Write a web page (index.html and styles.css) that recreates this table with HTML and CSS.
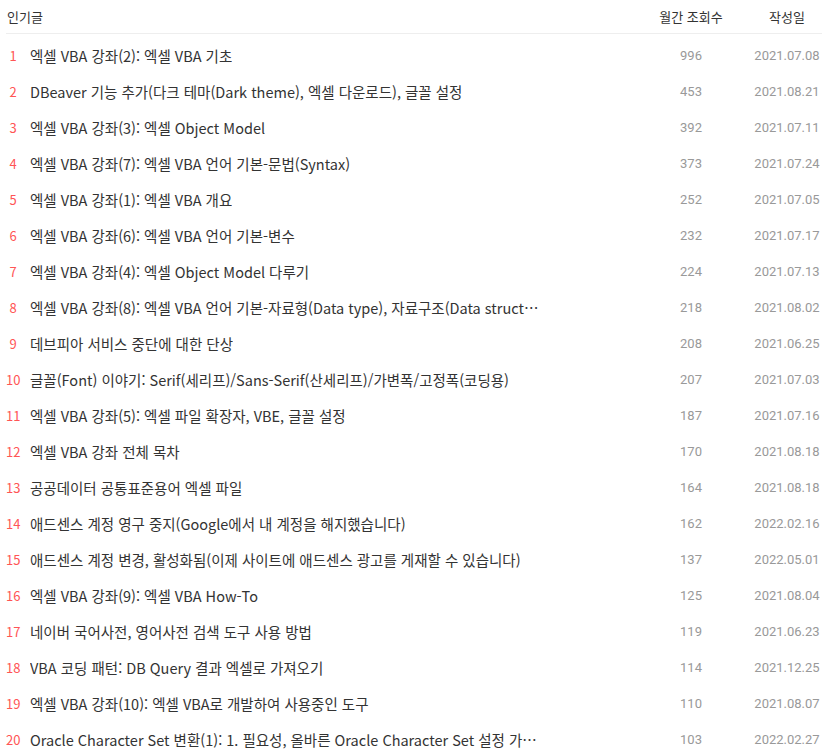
FILE: index.html
```html
<!DOCTYPE html>
<html lang="ko">
<head>
<meta charset="utf-8">
<link rel="stylesheet" href="styles.css">
</head>
<body>
<div class="board">
  <div class="head">
    <div class="h-title">인기글</div>
    <div class="h-views">월간 조회수</div>
    <div class="h-date">작성일</div>
  </div>
  <ul class="list">
    <li class="row"><div class="title"><span class="num">1</span><span class="txt">엑셀 VBA 강좌(2): 엑셀 VBA 기초</span></div><div class="views">996</div><div class="date">2021.07.08</div></li>
    <li class="row"><div class="title"><span class="num">2</span><span class="txt">DBeaver 기능 추가(다크 테마(Dark theme), 엑셀 다운로드), 글꼴 설정</span></div><div class="views">453</div><div class="date">2021.08.21</div></li>
    <li class="row"><div class="title"><span class="num">3</span><span class="txt">엑셀 VBA 강좌(3): 엑셀 Object Model</span></div><div class="views">392</div><div class="date">2021.07.11</div></li>
    <li class="row"><div class="title"><span class="num">4</span><span class="txt">엑셀 VBA 강좌(7): 엑셀 VBA 언어 기본-문법(Syntax)</span></div><div class="views">373</div><div class="date">2021.07.24</div></li>
    <li class="row"><div class="title"><span class="num">5</span><span class="txt">엑셀 VBA 강좌(1): 엑셀 VBA 개요</span></div><div class="views">252</div><div class="date">2021.07.05</div></li>
    <li class="row"><div class="title"><span class="num">6</span><span class="txt">엑셀 VBA 강좌(6): 엑셀 VBA 언어 기본-변수</span></div><div class="views">232</div><div class="date">2021.07.17</div></li>
    <li class="row"><div class="title"><span class="num">7</span><span class="txt">엑셀 VBA 강좌(4): 엑셀 Object Model 다루기</span></div><div class="views">224</div><div class="date">2021.07.13</div></li>
    <li class="row"><div class="title"><span class="num">8</span><span class="txt">엑셀 VBA 강좌(8): 엑셀 VBA 언어 기본-자료형(Data type), 자료구조(Data structure)</span></div><div class="views">218</div><div class="date">2021.08.02</div></li>
    <li class="row"><div class="title"><span class="num">9</span><span class="txt">데브피아 서비스 중단에 대한 단상</span></div><div class="views">208</div><div class="date">2021.06.25</div></li>
    <li class="row"><div class="title"><span class="num">10</span><span class="txt">글꼴(Font) 이야기: Serif(세리프)/Sans-Serif(산세리프)/가변폭/고정폭(코딩용)</span></div><div class="views">207</div><div class="date">2021.07.03</div></li>
    <li class="row"><div class="title"><span class="num">11</span><span class="txt">엑셀 VBA 강좌(5): 엑셀 파일 확장자, VBE, 글꼴 설정</span></div><div class="views">187</div><div class="date">2021.07.16</div></li>
    <li class="row"><div class="title"><span class="num">12</span><span class="txt">엑셀 VBA 강좌 전체 목차</span></div><div class="views">170</div><div class="date">2021.08.18</div></li>
    <li class="row"><div class="title"><span class="num">13</span><span class="txt">공공데이터 공통표준용어 엑셀 파일</span></div><div class="views">164</div><div class="date">2021.08.18</div></li>
    <li class="row"><div class="title"><span class="num">14</span><span class="txt">애드센스 계정 영구 중지(Google에서 내 계정을 해지했습니다)</span></div><div class="views">162</div><div class="date">2022.02.16</div></li>
    <li class="row"><div class="title"><span class="num">15</span><span class="txt">애드센스 계정 변경, 활성화됨(이제 사이트에 애드센스 광고를 게재할 수 있습니다)</span></div><div class="views">137</div><div class="date">2022.05.01</div></li>
    <li class="row"><div class="title"><span class="num">16</span><span class="txt">엑셀 VBA 강좌(9): 엑셀 VBA How-To</span></div><div class="views">125</div><div class="date">2021.08.04</div></li>
    <li class="row"><div class="title"><span class="num">17</span><span class="txt">네이버 국어사전, 영어사전 검색 도구 사용 방법</span></div><div class="views">119</div><div class="date">2021.06.23</div></li>
    <li class="row"><div class="title"><span class="num">18</span><span class="txt">VBA 코딩 패턴: DB Query 결과 엑셀로 가져오기</span></div><div class="views">114</div><div class="date">2021.12.25</div></li>
    <li class="row"><div class="title"><span class="num">19</span><span class="txt">엑셀 VBA 강좌(10): 엑셀 VBA로 개발하여 사용중인 도구</span></div><div class="views">110</div><div class="date">2021.08.07</div></li>
    <li class="row"><div class="title"><span class="num">20</span><span class="txt">Oracle Character Set 변환(1): 1. 필요성, 올바른 Oracle Character Set 설정 가이드</span></div><div class="views">103</div><div class="date">2022.02.27</div></li>
  </ul>
</div>
</body>
</html>
```

FILE: styles.css
```css
* { box-sizing: border-box; }
html, body { margin: 0; padding: 0; background: #fff; }
body {
  font-family: "Noto Sans CJK KR", "Noto Sans", sans-serif;
  color: #333;
}
.board {
  padding: 0 6px 0 6px;
  width: 828px;
}
.head {
  display: grid;
  grid-template-columns: 1fr 90px 70px;
  column-gap: 16px;
  height: 34px;
  align-items: center;
  border-bottom: 1px solid #eee;
  font-size: 13px;
  color: #333;
  padding-bottom: 1px;
}
.h-title { padding-left: 1px; }
.h-views, .h-date { text-align: center; }
.list { list-style: none; margin: 0; padding: 3px 0 0 0; }
.row {
  display: grid;
  grid-template-columns: 1fr 90px 70px;
  column-gap: 16px;
  height: 36px;
  align-items: center;
}
.title {
  display: flex;
  align-items: center;
  min-width: 0;
  font-size: 14.5px;
  color: #333;
}
.num {
  flex: none;
  width: 14px;
  margin-right: 10px;
  text-align: center;
  color: #f55;
  font-size: 13px;
}
.txt {
  white-space: nowrap;
  overflow: hidden;
  text-overflow: ellipsis;
  max-width: 510px;
}
.views, .date {
  text-align: center;
  font-family: Roboto, "Noto Sans", sans-serif;
  font-size: 13px;
  color: #999;
}
```
